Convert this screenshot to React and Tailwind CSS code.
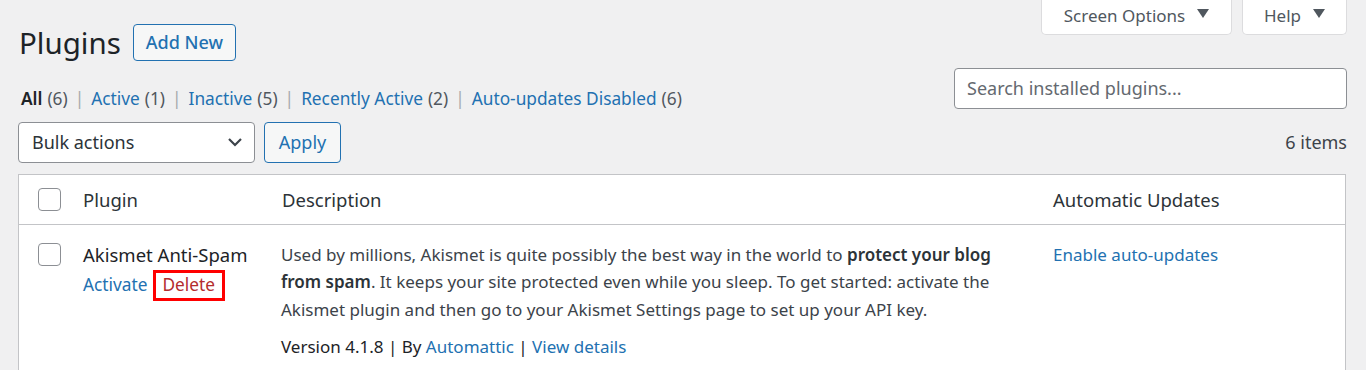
import React from 'react';

const font = { fontFamily: '"Noto Sans", "Open Sans", sans-serif' };

const Caret = () => (
  <svg width="12" height="10" viewBox="0 0 12 10" className="ml-3 mt-[-4px]">
    <path d="M0 0 L12 0 L6 9 Z" fill="#50575e" />
  </svg>
);

const Checkbox = () => (
  <span className="block w-[23px] h-[23px] rounded-[4px] border border-[#8c8f94] bg-white" />
);

const Sep = () => <span className="mx-[7px] text-[#a7aaad]">|</span>;

export default function App() {
  return (
    <div className="bg-[#f0f0f1] h-[370px] w-[1366px] overflow-hidden text-[#3c434a]" style={font}>
      <div className="flex justify-end gap-[10px] pr-[19px]">
        <button className="w-[191px] h-[35px] bg-white border border-t-0 border-[#dcdcde] rounded-b-[5px] text-[17px] text-[#50575e] flex items-center justify-center pb-[2px]">
          Screen Options <Caret />
        </button>
        <button className="w-[105px] h-[35px] bg-white border border-t-0 border-[#dcdcde] rounded-b-[5px] text-[17px] text-[#50575e] flex items-center justify-center pb-[2px]">
          Help <Caret />
        </button>
      </div>

      <div className="pl-[18px] pr-[19px] flex justify-between">
        <div>
          <div className="flex items-center mt-[-11px]">
            <h1 className="text-[29.5px] text-[#1d2327] leading-none ml-[1px]">Plugins</h1>
            <button className="ml-[12px] h-[37px] px-[12px] border border-[#2271b1] rounded-[4px] bg-[#f6f7f7] text-[#2271b1] text-[18px] font-medium">
              Add New
            </button>
          </div>
          <div className="mt-[25px] text-[17.3px] flex items-center ml-[3px] text-[#50575e]">
            <span className="text-[#1d2327] font-semibold">All</span>
            <span className="ml-[5px]">(6)</span>
            <Sep />
            <span className="text-[#2271b1]">Active</span>
            <span className="ml-[5px]">(1)</span>
            <Sep />
            <span className="text-[#2271b1]">Inactive</span>
            <span className="ml-[5px]">(5)</span>
            <Sep />
            <span className="text-[#2271b1]">Recently Active</span>
            <span className="ml-[5px]">(2)</span>
            <Sep />
            <span className="text-[#2271b1]">Auto-updates Disabled</span>
            <span className="ml-[5px]">(6)</span>
          </div>
        </div>
        <div className="mt-[33px] w-[393px] h-[41px] border border-[#8c8f94] rounded-[4px] bg-white flex items-center px-[12px] text-[18px] text-[#646970]">
          Search installed plugins...
        </div>
      </div>

      <div className="pl-[18px] pr-[19px] mt-[10px] flex items-center justify-between">
        <div className="flex items-center gap-[9px]">
          <div className="w-[237px] h-[41px] border border-[#8c8f94] rounded-[4px] bg-white flex items-center justify-between pl-[13px] pr-[9px] text-[18px] text-[#2c3338]">
            Bulk actions
            <svg width="20" height="20" viewBox="0 0 20 20">
              <path d="M4 7 L10 13 L16 7" fill="none" stroke="#3c434a" strokeWidth="2.2" />
            </svg>
          </div>
          <button className="w-[77px] h-[41px] border border-[#2271b1] rounded-[4px] bg-[#f6f7f7] text-[#2271b1] text-[18px]">
            Apply
          </button>
        </div>
        <div className="text-[18px] text-[#3c434a]">6 items</div>
      </div>

      <div className="mx-[18px] mr-[20px] mt-[11px] bg-white border border-[#c3c4c7]">
        <div className="flex items-center h-[50px] border-b border-[#c3c4c7] text-[18.5px] text-[#2c3338]">
          <div className="w-[64px] pl-[19px]"><Checkbox /></div>
          <div className="w-[199px]">Plugin</div>
          <div className="w-[771px]">Description</div>
          <div>Automatic Updates</div>
        </div>
        <div className="flex items-start h-[200px] pt-[16px]">
          <div className="w-[64px] pl-[19px] pt-[2px]"><Checkbox /></div>
          <div className="w-[198px]">
            <div className="text-[18.5px] text-[#1d2327] leading-[27px]">Akismet Anti-Spam</div>
            <div className="flex items-center text-[17.3px] mt-[2px]">
              <span className="text-[#2271b1]">Activate</span>
              <span className="ml-[5px] border-[3px] border-[#ff0000] px-[7px] h-[31px] flex items-center text-[#b32d2e]">Delete</span>
            </div>
          </div>
          <div className="w-[772px] text-[17px] leading-[27.5px] text-[#3c434a]">
            <p>
              Used by millions, Akismet is quite possibly the best way in the world to <strong className="text-[#2c3338] font-semibold">protect your blog</strong><br />
              <strong className="text-[#2c3338] font-semibold">from spam</strong>. It keeps your site protected even while you sleep. To get started: activate the<br />
              Akismet plugin and then go to your Akismet Settings page to set up your API key.
            </p>
            <p className="mt-[10px] text-[#1d2327]">
              Version 4.1.8 | By <span className="text-[#2271b1]">Automattic</span> | <span className="text-[#2271b1]">View details</span>
            </p>
          </div>
          <div className="text-[17px] text-[#2271b1] leading-[27px]">Enable auto-updates</div>
        </div>
      </div>
    </div>
  );
}
